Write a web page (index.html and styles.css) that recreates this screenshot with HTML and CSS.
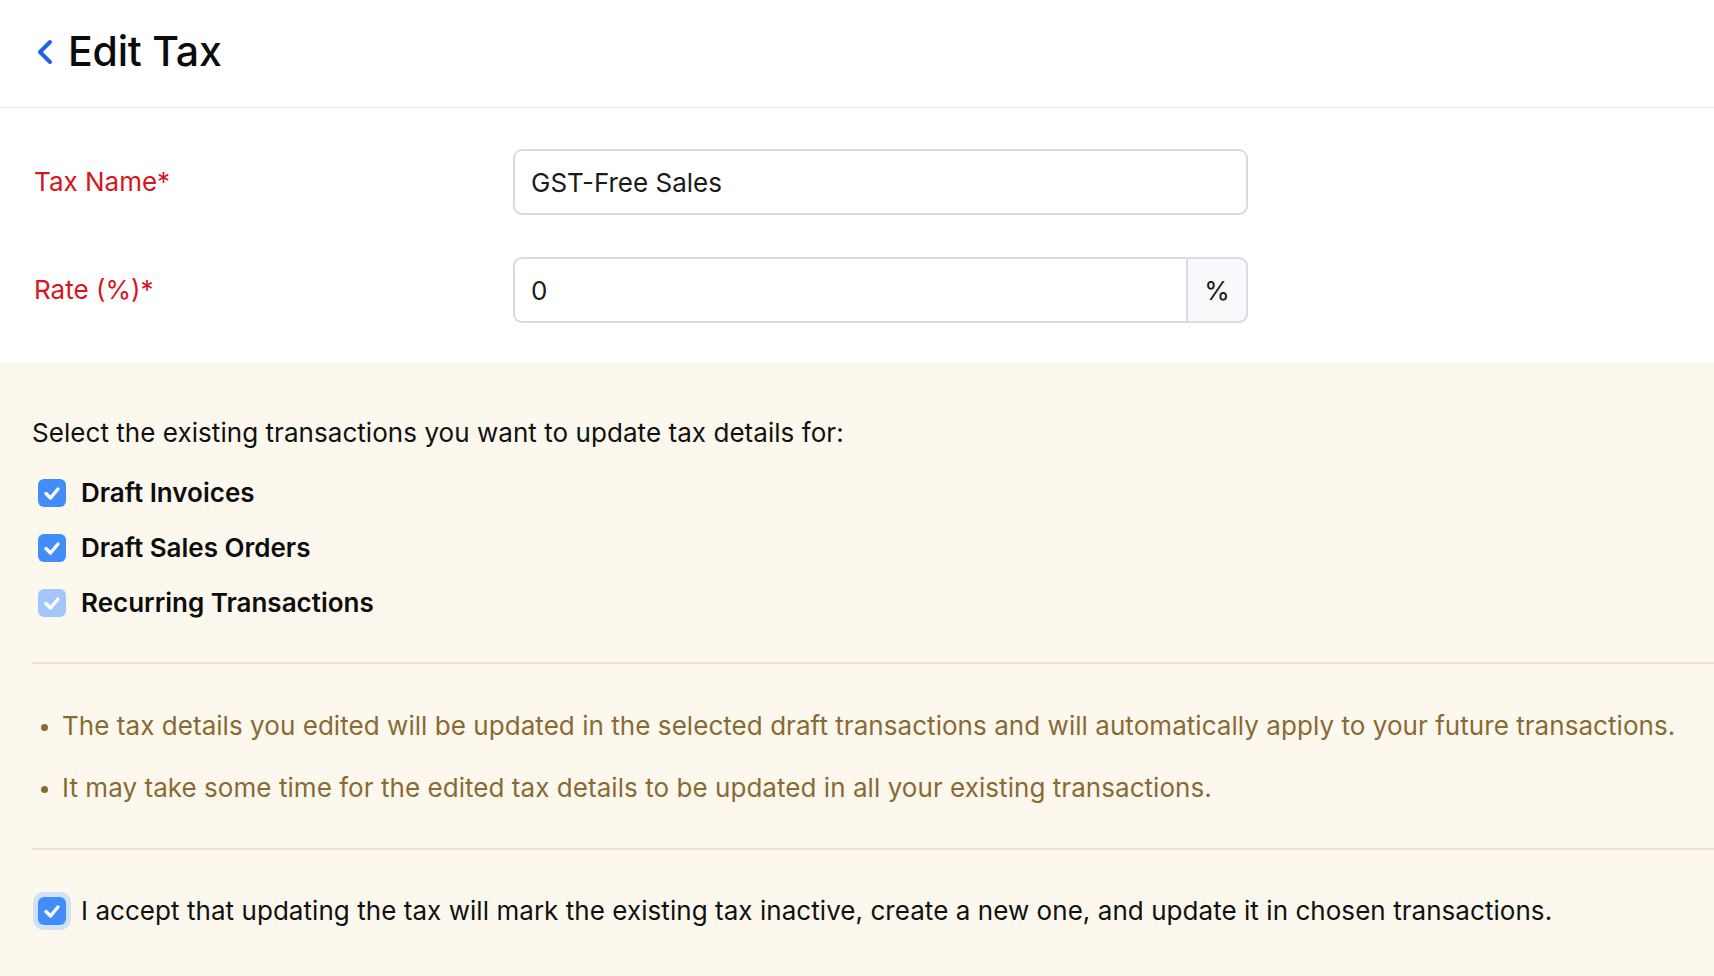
FILE: index.html
```html
<!DOCTYPE html>
<html lang="en">
<head>
<meta charset="utf-8">
<title>Edit Tax</title>
<link rel="stylesheet" href="styles.css">
</head>
<body>
<header class="page-header">
  <a class="back" href="#" aria-label="Back">
    <svg width="18" height="26" viewBox="0 0 18 26"><polyline points="14,3 4,13 14,23" fill="none" stroke="#2163e0" stroke-width="4" stroke-linecap="round" stroke-linejoin="round"/></svg>
  </a>
  <h1 class="title">Edit Tax</h1>
</header>

<section class="form">
  <div class="row">
    <label class="label">Tax Name*</label>
    <div class="field"><div class="input">GST-Free Sales</div></div>
  </div>
  <div class="row">
    <label class="label">Rate (%)*</label>
    <div class="field group">
      <div class="input grow">0</div>
      <div class="addon">%</div>
    </div>
  </div>
</section>

<section class="notice">
  <p class="lead">Select the existing transactions you want to update tax details for:</p>
  <ul class="checks">
    <li class="check"><span class="box"><svg viewBox="0 0 28 28"><polyline points="8,14.5 12.5,19 20,10" fill="none" stroke="#fff" stroke-width="3.4" stroke-linecap="round" stroke-linejoin="round"/></svg></span><span class="check-label">Draft Invoices</span></li>
    <li class="check"><span class="box"><svg viewBox="0 0 28 28"><polyline points="8,14.5 12.5,19 20,10" fill="none" stroke="#fff" stroke-width="3.4" stroke-linecap="round" stroke-linejoin="round"/></svg></span><span class="check-label">Draft Sales Orders</span></li>
    <li class="check"><span class="box disabled"><svg viewBox="0 0 28 28"><polyline points="8,14.5 12.5,19 20,10" fill="none" stroke="#fff" stroke-width="3.4" stroke-linecap="round" stroke-linejoin="round"/></svg></span><span class="check-label">Recurring Transactions</span></li>
  </ul>
  <hr class="divider">
  <ul class="bullets">
    <li>The tax details you edited will be updated in the selected draft transactions and will automatically apply to your future transactions.</li>
    <li>It may take some time for the edited tax details to be updated in all your existing transactions.</li>
  </ul>
  <hr class="divider">
  <div class="accept">
    <span class="box focus"><svg viewBox="0 0 28 28"><polyline points="8,14.5 12.5,19 20,10" fill="none" stroke="#fff" stroke-width="3.4" stroke-linecap="round" stroke-linejoin="round"/></svg></span>
    <span class="accept-text">I accept that updating the tax will mark the existing tax inactive, create a new one, and update it in chosen transactions.</span>
  </div>
</section>
</body>
</html>
```

FILE: styles.css
```css
* { box-sizing: border-box; }
html, body { margin: 0; padding: 0; }
body {
  font-family: Inter, "Noto Sans", "Liberation Sans", sans-serif;
  font-size: 26px;
  color: #111;
  background: #fcf8ed;
  width: 1714px;
  height: 976px;
  overflow: hidden;
}
.page-header {
  height: 108px;
  background: #fff;
  border-bottom: 1px solid #e6e5ee;
  display: flex;
  align-items: center;
  padding-left: 36px;
  padding-bottom: 6px;
}
.back { display: flex; align-items: center; margin-right: 14px; margin-top: 2px; }
.back svg { display: block; }
.title {
  margin: 0;
  font-size: 41px;
  font-weight: 500;
  color: #0b0b0b;
  letter-spacing: -0.2px;
}
.form {
  background: #fff;
  padding: 41px 0 40px 34px;
  display: flex;
  flex-direction: column;
  gap: 42px;
}
.row { display: flex; align-items: center; }
.label {
  width: 479px;
  color: #d7151f;
  font-size: 26px;
  padding-bottom: 2px;
}
.field { width: 735px; }
.input {
  height: 66px;
  border: 2px solid #dad9e6;
  border-radius: 9px;
  background: #fff;
  display: flex;
  align-items: center;
  padding-left: 16px;
  font-size: 26px;
  color: #1a1a1a;
}
.group { display: flex; }
.group .input.grow {
  flex: 1;
  border-radius: 9px 0 0 9px;
  border-right: none;
}
.addon {
  width: 62px;
  height: 66px;
  border: 2px solid #dad9e6;
  border-radius: 0 9px 9px 0;
  background: #f9f9fb;
  display: flex;
  align-items: center;
  justify-content: center;
  font-size: 26px;
  color: #1a1a1a;
}
.notice {
  padding: 55px 0 0 32px;
}
.lead {
  margin: 0;
  line-height: 30px;
  color: #111;
  letter-spacing: 0.05px;
}
.checks {
  list-style: none;
  margin: 30px 0 0 6px;
  padding: 0;
  display: flex;
  flex-direction: column;
  gap: 26px;
}
.check { display: flex; align-items: center; height: 29px; }
.box {
  width: 28px;
  height: 28px;
  border-radius: 6px;
  background: #408dfb;
  flex: none;
  display: inline-flex;
}
.box svg { width: 28px; height: 28px; display: block; }
.box.disabled { background: #a3c6fb; }
.box.focus { box-shadow: 0 0 0 5px #d1e1f6; }
.check-label {
  margin-left: 15px;
  font-weight: 600;
  color: #0d0d0d;
}
.divider {
  border: none;
  border-top: 2px solid #e7e2d4;
  margin: 45px 0 0 0;
}
.bullets {
  margin: 47px 0 0 0;
  padding: 0 0 13px 30px;
  color: #8a6a34;
  line-height: 30px;
  letter-spacing: 0.05px;
}
.bullets li { margin-bottom: 32px; }
.bullets li::marker { font-size: 22px; }
.bullets + .divider { margin-top: 0; }
.accept {
  display: flex;
  align-items: center;
  margin: 45px 0 0 6px;
}
.accept-text { margin-left: 15px; color: #111; letter-spacing: 0.05px; }
```
